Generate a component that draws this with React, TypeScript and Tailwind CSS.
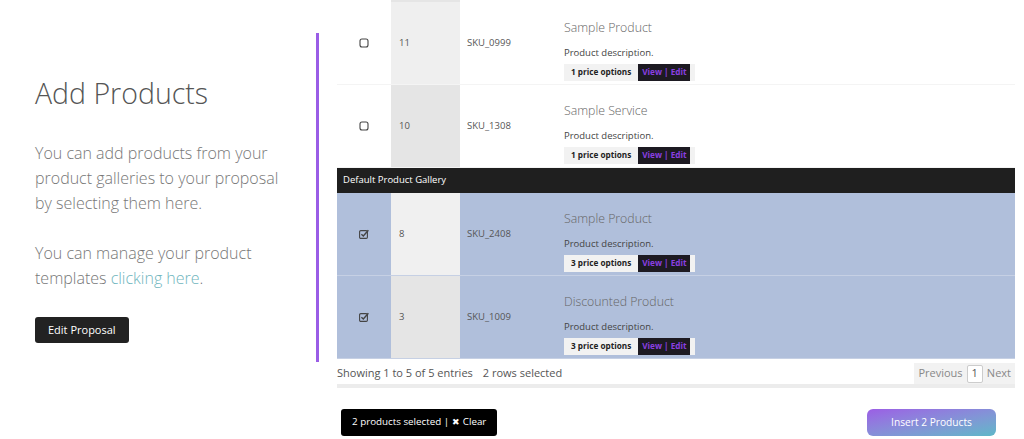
import React from 'react';

type Row = {
  id: number;
  sku: string;
  name: string;
  options: number;
  selected: boolean;
  idBg: string;
};

const topRows: Row[] = [
  { id: 11, sku: 'SKU_0999', name: 'Sample Product', options: 1, selected: false, idBg: 'bg-[#efefef]' },
  { id: 10, sku: 'SKU_1308', name: 'Sample Service', options: 1, selected: false, idBg: 'bg-[#e5e5e5]' },
];

const galleryRows: Row[] = [
  { id: 8, sku: 'SKU_2408', name: 'Sample Product', options: 3, selected: true, idBg: 'bg-[#f0f0f0]' },
  { id: 3, sku: 'SKU_1009', name: 'Discounted Product', options: 3, selected: true, idBg: 'bg-[#e5e5e5]' },
];

const Box = ({ checked }: { checked: boolean }) =>
  checked ? (
    <svg width="10" height="10" viewBox="0 0 10 10" className="text-[#444]">
      <rect x="0.6" y="1.6" width="7.8" height="7.8" rx="1.2" fill="none" stroke="currentColor" strokeWidth="1.1" />
      <path d="M2.4 5.2 L4.3 7 L9.4 1.2" fill="none" stroke="currentColor" strokeWidth="1.4" />
    </svg>
  ) : (
    <svg width="10" height="10" viewBox="0 0 10 10" className="text-[#444]">
      <rect x="1" y="1" width="8" height="8" rx="2" fill="none" stroke="currentColor" strokeWidth="1.1" />
    </svg>
  );

const ProductRow = ({ row }: { row: Row }) => (
  <div className={`flex h-[83px] border-b ${row.selected ? 'bg-[#b0bfdb] border-[#c6d0e4]' : 'bg-white border-[#f4f4f4]'}`}>
    <div className="w-[54px] flex items-center justify-center">
      <Box checked={row.selected} />
    </div>
    <div className={`w-[69px] flex items-center pl-[8px] text-[9.5px] text-[#555] ${row.idBg}`}>{row.id}</div>
    <div className="w-[95px] flex items-center pl-[7px] text-[9.5px] text-[#555]">{row.sku}</div>
    <div className="flex-1 pl-[9px] pt-[16px]">
      <div className="text-[12.3px] font-light text-[#666] leading-[20px]">{row.name}</div>
      <div className="text-[9.5px] text-[#444] mt-[8px] leading-[14px]">Product description.</div>
      <div className="flex mt-[4px]">
        <div className="flex items-center h-[17px] bg-[#f2f2f2] pr-[5px]">
          <span className="text-[8.2px] font-bold text-[#222] px-[7px]">{row.options} price options</span>
          <span className="h-[17px] bg-[#1d1a22] px-[4px] flex items-center text-[8.2px] font-bold text-[#8a3fe0]">View | Edit</span>
        </div>
      </div>
    </div>
  </div>
);

export default function App() {
  return (
    <div className="w-[1024px] h-[439px] bg-white flex items-start overflow-hidden font-['Open_Sans',sans-serif]">
      {/* Left intro */}
      <div className="w-[319px] mt-[33px] h-[329px] border-r-[3px] border-[#9a5de6] pl-[35px] pr-[30px] pt-[42px]">
        <h1 className="text-[28.5px] font-light text-[#555] leading-[36px]">Add Products</h1>
        <p className="mt-[30px] text-[16px] font-light text-[#777] leading-[25px]">
          You can add products from your product galleries to your proposal by selecting them here.
        </p>
        <p className="mt-[25px] text-[16px] font-light text-[#777] leading-[25px]">
          You can manage your product templates <a className="text-[#6fb5bd]">clicking here</a>.
        </p>
        <button className="mt-[26px] h-[26px] px-[13px] bg-[#222] rounded-[3px] text-white text-[11px]">Edit Proposal</button>
      </div>

      {/* Right table */}
      <div className="ml-[18px] w-[678px] flex flex-col">
        <div className="flex h-[2px]">
          <div className="w-[54px]" />
          <div className="w-[69px] bg-[#e5e5e5]" />
        </div>
        {topRows.map(r => <ProductRow key={r.id} row={r} />)}
        <div className="h-[25px] bg-[#1f1f1f] flex items-center pl-[6px] text-[9.5px] text-white">Default Product Gallery</div>
        {galleryRows.map(r => <ProductRow key={r.id} row={r} />)}
        <div className="flex items-center justify-between h-[25px] pt-[4px]">
          <span className="text-[11px] text-[#555]">
            Showing 1 to 5 of 5 entries<span className="ml-[10px]">2 rows selected</span>
          </span>
          <div className="flex items-center h-[21px] bg-[#f2f2f2] text-[11px] text-[#888]">
            <span className="px-[4px]">Previous</span>
            <span className="h-[18px] px-[4px] border border-[#ccc] rounded-[2px] bg-white text-[#555] flex items-center">1</span>
            <span className="px-[4px]">Next</span>
          </div>
        </div>
        <div className="h-[4px] bg-[#ececec]" />
        <div className="flex items-center justify-between mt-[21px] pl-[4px] pr-[19px]">
          <div className="h-[27px] px-[11px] bg-black rounded-[3px] flex items-center text-white text-[9.8px]">
            2 products selected | <span className="ml-[3px] text-[8.5px]">✖</span>&nbsp;Clear
          </div>
          <button className="h-[27px] w-[129px] rounded-[6px] bg-gradient-to-br from-[#9b5de5] to-[#5cb8c8] text-white text-[10.2px]">
            Insert 2 Products
          </button>
        </div>
      </div>
    </div>
  );
}
